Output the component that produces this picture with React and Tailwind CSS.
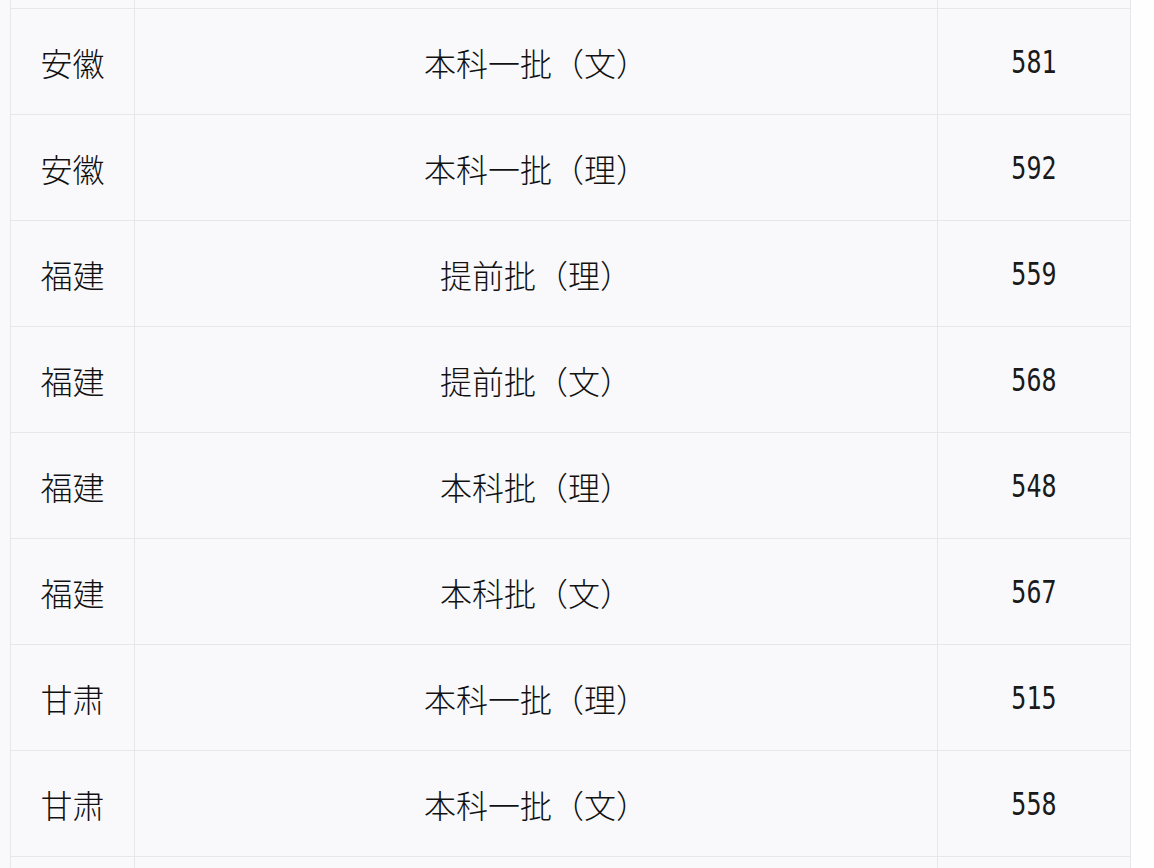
import React from 'react';

const rows = [
  ['安徽', '本科一批（文）', '581'],
  ['安徽', '本科一批（理）', '592'],
  ['福建', '提前批（理）', '559'],
  ['福建', '提前批（文）', '568'],
  ['福建', '本科批（理）', '548'],
  ['福建', '本科批（文）', '567'],
  ['甘肃', '本科一批（理）', '515'],
  ['甘肃', '本科一批（文）', '558'],
];

function Row({ cells, h, last }) {
  return (
    <div className={`grid grid-cols-[124px_803px_194px] ${last ? '' : 'border-b border-[#e6e6eb]'}`} style={{ height: h }}>
      <div className="border-l border-[#e6e6eb] flex items-center justify-center">
        {cells && <span className="text-[32px] text-[#111]">{cells[0]}</span>}
      </div>
      <div className="border-l border-[#e6e6eb] flex items-center justify-center">
        {cells && <span className="text-[32px] text-[#111] [text-spacing-trim:space-all]">{cells[1]}</span>}
      </div>
      <div className="border-l border-r border-[#e6e6eb] flex items-center justify-center">
        {cells && (
          <span className="inline-block text-[32px] font-normal text-[#1a1a1a] scale-x-[0.78] [font-family:'DejaVu_Sans_Mono',monospace]">
            {cells[2]}
          </span>
        )}
      </div>
    </div>
  );
}

export default function App() {
  return (
    <div className="w-[1154px] h-[868px] overflow-hidden bg-[#fefefe] font-light font-['Noto_Sans_CJK_JP','Noto_Sans_CJK_SC',sans-serif]">
      <div className="w-[1131px] pl-[10px] bg-[#f9f9fb]">
        <Row h={9} />
        {rows.map((r, i) => (
          <Row key={i} cells={r} h={106} />
        ))}
        <Row h={20} last />
      </div>
    </div>
  );
}
